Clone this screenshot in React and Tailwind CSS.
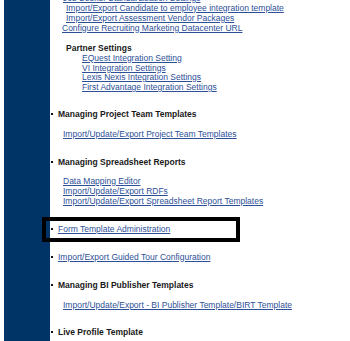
import React from "react";

const LINK = "text-[#2d4f98] underline decoration-[0.5px] underline-offset-[1px]";

function Bullet() {
  return <span className="ml-[1px] mr-[5px] inline-block h-[2px] w-[2px] shrink-0 bg-[#111]" />;
}

function Heading({ children, className = "" }) {
  return (
    <div className={`flex items-center h-[10px] ${className}`}>
      <Bullet />
      <span className="font-bold text-[#1a1a1a]">{children}</span>
    </div>
  );
}

function BulletLink({ children, className = "" }) {
  return (
    <div className={`flex items-center h-[10px] ${className}`}>
      <Bullet />
      <a className={LINK}>{children}</a>
    </div>
  );
}

export default function App() {
  return (
    <div
      className="relative flex h-[341px] w-[350px] overflow-hidden bg-white text-[8.5px] leading-[10px]"
      style={{ fontFamily: '"Liberation Sans", Arial, sans-serif' }}
    >
      <div className="w-[4px] shrink-0" />
      <div className="w-[46px] shrink-0 bg-[#003366]" />
      <div className="flex-1 whitespace-nowrap">
        <div className="mt-[-7.5px] flex flex-col">
          <a className={`${LINK} ml-[13px] h-[10px]`}>Job Seeker Standardization Settings</a>
          <a className={`${LINK} ml-[16px] h-[10px]`}>Import/Export Candidate to employee integration template</a>
          <a className={`${LINK} ml-[16px] h-[10px]`}>Import/Export Assessment Vendor Packages</a>
          <a className={`${LINK} ml-[12px] h-[10px]`}>Configure Recruiting Marketing Datacenter URL</a>
        </div>
        <div className="mt-[10px] ml-[16px] h-[10px] font-bold text-[#1a1a1a]">Partner Settings</div>
        <div className="ml-[32px] flex flex-col">
          <a className={`${LINK} h-[10px]`}>EQuest Integration Setting</a>
          <a className={`${LINK} h-[9.5px]`}>VI Integration Settings</a>
          <a className={`${LINK} h-[10px]`}>Lexis Nexis Integration Settings</a>
          <a className={`${LINK} h-[10px]`}>First Advantage Integration Settings</a>
        </div>

        <Heading className="mt-[17px]">Managing Project Team Templates</Heading>
        <div className="mt-[9.5px] ml-[13px] h-[10px]">
          <a className={LINK}>Import/Update/Export Project Team Templates</a>
        </div>

        <Heading className="mt-[18px]">Managing Spreadsheet Reports</Heading>
        <div className="mt-[9px] ml-[13px] flex flex-col">
          <a className={`${LINK} h-[10px]`}>Data Mapping Editor</a>
          <a className={`${LINK} h-[10px]`}>Import/Update/Export RDFs</a>
          <a className={`${LINK} h-[10px]`}>Import/Update/Export Spreadsheet Report Templates</a>
        </div>

        <BulletLink className="mt-[18px]">Form Template Administration</BulletLink>
        <BulletLink className="mt-[18px]">Import/Export Guided Tour Configuration</BulletLink>

        <Heading className="mt-[18px]">Managing BI Publisher Templates</Heading>
        <div className="mt-[10px] ml-[13px] h-[10px]">
          <a className={LINK}>Import/Update/Export - BI Publisher Template/BIRT Template</a>
        </div>

        <Heading className="mt-[17px]">Live Profile Template</Heading>
      </div>

      <div className="pointer-events-none absolute left-[42px] top-[217px] h-[25px] w-[198px] border-[4px] border-black" />
    </div>
  );
}
